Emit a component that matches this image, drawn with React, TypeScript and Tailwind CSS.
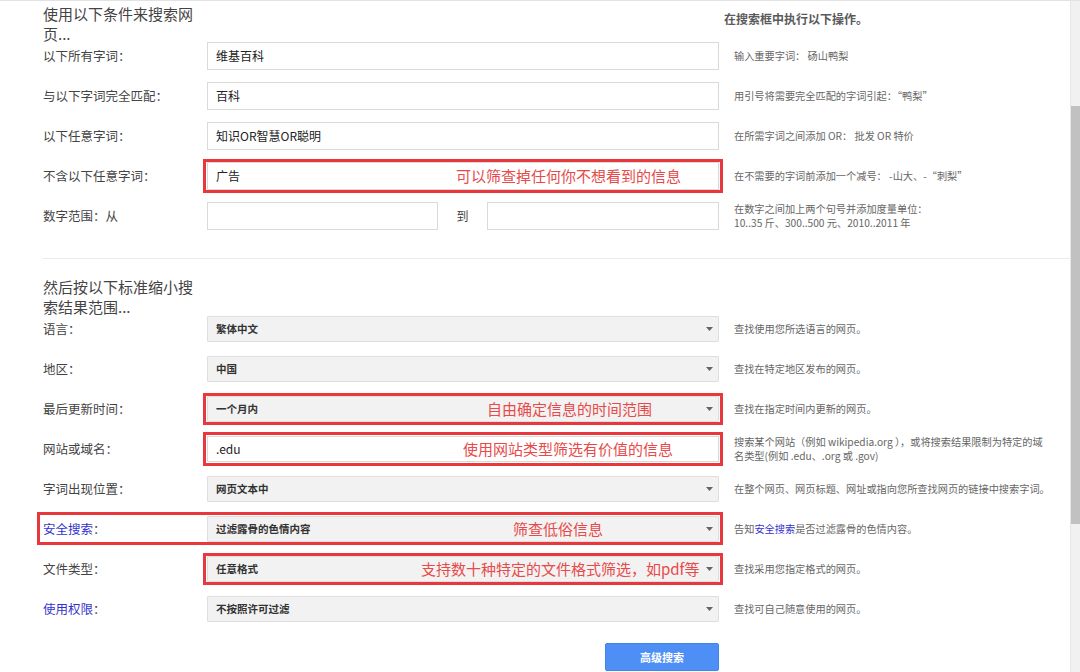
import type { ReactNode } from 'react';

const RED_BOX = 'absolute border-[3px] border-[#e8383d] pointer-events-none';

function Annotation({ left, children }: { left: string; children: ReactNode }) {
  return (
    <div className={`absolute top-0 bottom-0 flex items-center text-[15px] text-[#e84a4a] whitespace-nowrap pointer-events-none ${left}`}>
      {children}
    </div>
  );
}

function TextInput({ value = '', h = 'h-[28px]' }: { value?: string; h?: string }) {
  return (
    <div className={`${h} w-full bg-white border border-[#d9d9d9] flex items-center pl-2 text-[12px] text-[#222]`}>
      {value}
    </div>
  );
}

function Select({ value }: { value: string }) {
  return (
    <div className="h-[26px] w-full bg-[#f2f2f2] border border-[#dedede] rounded-[1px] flex items-center justify-between pl-2 pr-[5px] text-[10.5px] font-bold text-[#333]">
      <span>{value}</span>
      <svg width="7" height="4" viewBox="0 0 7 4">
        <polygon points="0,0 7,0 3.5,4" fill="#666" />
      </svg>
    </div>
  );
}

function Row({
  label,
  control,
  help,
  h = 'h-[28px]',
  overlay,
}: {
  label: ReactNode;
  control: ReactNode;
  help: ReactNode;
  h?: string;
  overlay?: ReactNode;
}) {
  return (
    <div className="relative grid grid-cols-[164px_512px_1fr] h-10 items-start">
      <div className={`${h} flex items-center text-[12.5px] text-[#444] whitespace-nowrap`}>{label}</div>
      <div className="relative">{control}</div>
      <div className={`${h} flex items-center pl-[15px] text-[10.2px] leading-[14px] text-[#666] whitespace-nowrap`}>
        <div>{help}</div>
      </div>
      {overlay}
    </div>
  );
}

export default function App() {
  return (
    <div className="w-[1080px] h-[672px] flex overflow-hidden bg-white border-t border-[#e2e2e2] font-['Noto_Sans_CJK_SC','Noto_Sans',sans-serif]">
      <div className="flex-1 pl-[43px]">
        {/* section 1 */}
        <div className="grid grid-cols-[164px_512px_1fr] h-[41px]">
          <div className="w-[158px] pt-[3px] text-[15px] leading-5 text-[#444]">使用以下条件来搜索网页...</div>
          <div />
          <div className="pl-[5px] pt-[10px] text-[12px] leading-4 font-bold text-[#5a5a5a]">在搜索框中执行以下操作。</div>
        </div>

        <Row label="以下所有字词：" control={<TextInput value="维基百科" />} help="输入重要字词： 砀山鸭梨" />
        <Row label="与以下字词完全匹配：" control={<TextInput value="百科" />} help="用引号将需要完全匹配的字词引起：“鸭梨”" />
        <Row label="以下任意字词：" control={<TextInput value="知识OR智慧OR聪明" />} help="在所需字词之间添加 OR： 批发 OR 特价" />
        <Row
          label="不含以下任意字词："
          control={
            <>
              <TextInput value="广告" />
              <div className={`${RED_BOX} -inset-x-1 -inset-y-[3px]`} />
              <Annotation left="left-[249px]">可以筛查掉任何你不想看到的信息</Annotation>
            </>
          }
          help="在不需要的字词前添加一个减号： -山大、-“刺梨”"
        />
        <Row
          label="数字范围：从"
          control={
            <div className="flex items-center">
              <div className="w-[231px]">
                <TextInput />
              </div>
              <span className="flex-1 text-center text-[12px] text-[#444]">到</span>
              <div className="w-[232px]">
                <TextInput />
              </div>
            </div>
          }
          help={
            <>
              在数字之间加上两个句号并添加度量单位：
              <br />
              10..35 斤、300..500 元、2010..2011 年
            </>
          }
        />

        <div className="mt-4 border-t border-[#ebebeb]" />

        {/* section 2 */}
        <div className="mt-[18px] h-[39px]">
          <div className="w-[158px] text-[15px] leading-5 text-[#444]">然后按以下标准缩小搜索结果范围...</div>
        </div>

        <Row h="h-[26px]" label="语言：" control={<Select value="繁体中文" />} help="查找使用您所选语言的网页。" />
        <Row h="h-[26px]" label="地区：" control={<Select value="中国" />} help="查找在特定地区发布的网页。" />
        <Row
          h="h-[26px]"
          label="最后更新时间："
          control={
            <>
              <Select value="一个月内" />
              <div className={`${RED_BOX} -inset-x-1 -inset-y-[3px]`} />
              <Annotation left="left-[280px]">自由确定信息的时间范围</Annotation>
            </>
          }
          help="查找在指定时间内更新的网页。"
        />
        <Row
          h="h-[26px]"
          label="网站或域名："
          control={
            <>
              <TextInput h="h-[26px]" value=".edu" />
              <div className={`${RED_BOX} -inset-1`} />
              <Annotation left="left-[256px]">使用网站类型筛选有价值的信息</Annotation>
            </>
          }
          help={
            <>
              搜索某个网站（例如 wikipedia.org ），或将搜索结果限制为特定的域
              <br />
              名类型(例如 .edu、.org 或 .gov)
            </>
          }
        />
        <Row
          h="h-[26px]"
          label="字词出现位置："
          control={<Select value="网页文本中" />}
          help="在整个网页、网页标题、网址或指向您所查找网页的链接中搜索字词。"
        />
        <Row
          h="h-[26px]"
          label={<span><span className="text-[#3333cc]">安全搜索</span>：</span>}
          control={
            <>
              <Select value="过滤露骨的色情内容" />
              <Annotation left="left-[306px]">筛查低俗信息</Annotation>
            </>
          }
          help={
            <>
              告知<span className="text-[#3333cc]">安全搜索</span>是否过滤露骨的色情内容。
            </>
          }
          overlay={<div className={`${RED_BOX} left-[-6px] top-[-4px] w-[686px] h-[33px]`} />}
        />
        <Row
          h="h-[26px]"
          label="文件类型："
          control={
            <>
              <Select value="任意格式" />
              <div className={`${RED_BOX} -inset-x-1 -inset-y-[3px]`} />
              <Annotation left="left-[214px]">支持数十种特定的文件格式筛选，如pdf等</Annotation>
            </>
          }
          help="查找采用您指定格式的网页。"
        />
        <Row
          h="h-[26px]"
          label={<span><span className="text-[#3333cc]">使用权限</span>：</span>}
          control={<Select value="不按照许可过滤" />}
          help="查找可自己随意使用的网页。"
        />

        <div className="grid grid-cols-[164px_512px_1fr] mt-[7px]">
          <div />
          <div className="flex justify-end">
            <button className="w-[114px] h-[28px] bg-[#4d8ff5] border border-[#4285e8] rounded-[2px] text-[11px] font-bold text-white">
              高级搜索
            </button>
          </div>
        </div>
      </div>

      <div className="w-[10px] bg-[#f1f1f1] border-l border-[#e6e6e6] flex flex-col">
        <div className="mt-[105px] h-[418px] bg-[#c1c1c1]" />
      </div>
    </div>
  );
}
